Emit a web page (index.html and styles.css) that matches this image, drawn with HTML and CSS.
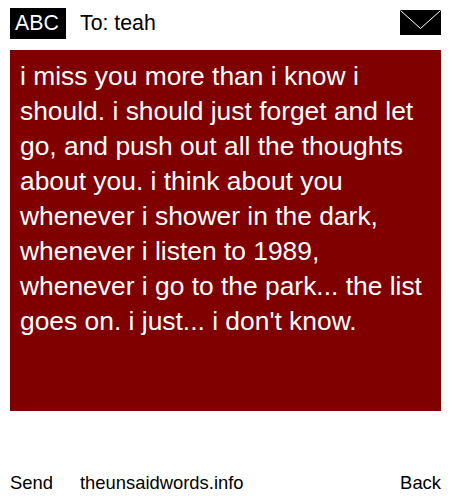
FILE: index.html
```html
<!DOCTYPE html>
<html lang="en">
<head>
    <meta charset="UTF-8">
    <title>theunsaidwords.info</title>
    <link rel="stylesheet" href="styles.css">
</head>
<body>
    <div class="header">
        <div class="abc">ABC</div>
        <div class="to">To: teah</div>
        <svg class="envelope" width="41" height="25" viewBox="0 0 41 25">
            <rect width="41" height="25" fill="#000"></rect>
            <path d="M0.5 0.5 L20.5 18.5 L40.5 0.5" fill="none" stroke="#fff" stroke-width="1"></path>
        </svg>
    </div>

    <div class="message">i miss you more than i know i should. i should just forget and let go, and push out all the thoughts about you. i think about you whenever i shower in the dark, whenever i listen to 1989, whenever i go to the park... the list goes on. i just... i don't know.</div>

    <div class="footer">
        <div class="send">Send</div>
        <div class="site">theunsaidwords.info</div>
        <div class="back">Back</div>
    </div>
</body>
</html>
```

FILE: styles.css
```css
* {
    margin: 0;
    padding: 0;
    box-sizing: border-box;
}

body {
    font-family: "Liberation Sans", Arial, sans-serif;
    background: #fff;
    color: #000;
    width: 450px;
    height: 500px;
    padding: 8px 9px 0 10px;
    overflow: hidden;
}

/* Header */
.header {
    display: flex;
    align-items: center;
    height: 31px;
    font-size: 21.3px;
}

.abc {
    width: 56px;
    height: 31px;
    padding-left: 5px;
    line-height: 31px;
    background: #000;
    color: #fff;
}

.to {
    margin-left: 14px;
}

.envelope {
    display: block;
    margin-left: auto;
    margin-bottom: 2px;
}

/* Message */
.message {
    height: 361px;
    margin-top: 11px;
    padding: 9px 10px;
    background: #800000;
    color: #fff;
    font-size: 26.4px;
    line-height: 35px;
}

/* Footer */
.footer {
    display: flex;
    margin-top: 60px;
    font-size: 18.4px;
    line-height: 24px;
}

.site {
    margin-left: 27px;
}

.back {
    margin-left: auto;
}
```
